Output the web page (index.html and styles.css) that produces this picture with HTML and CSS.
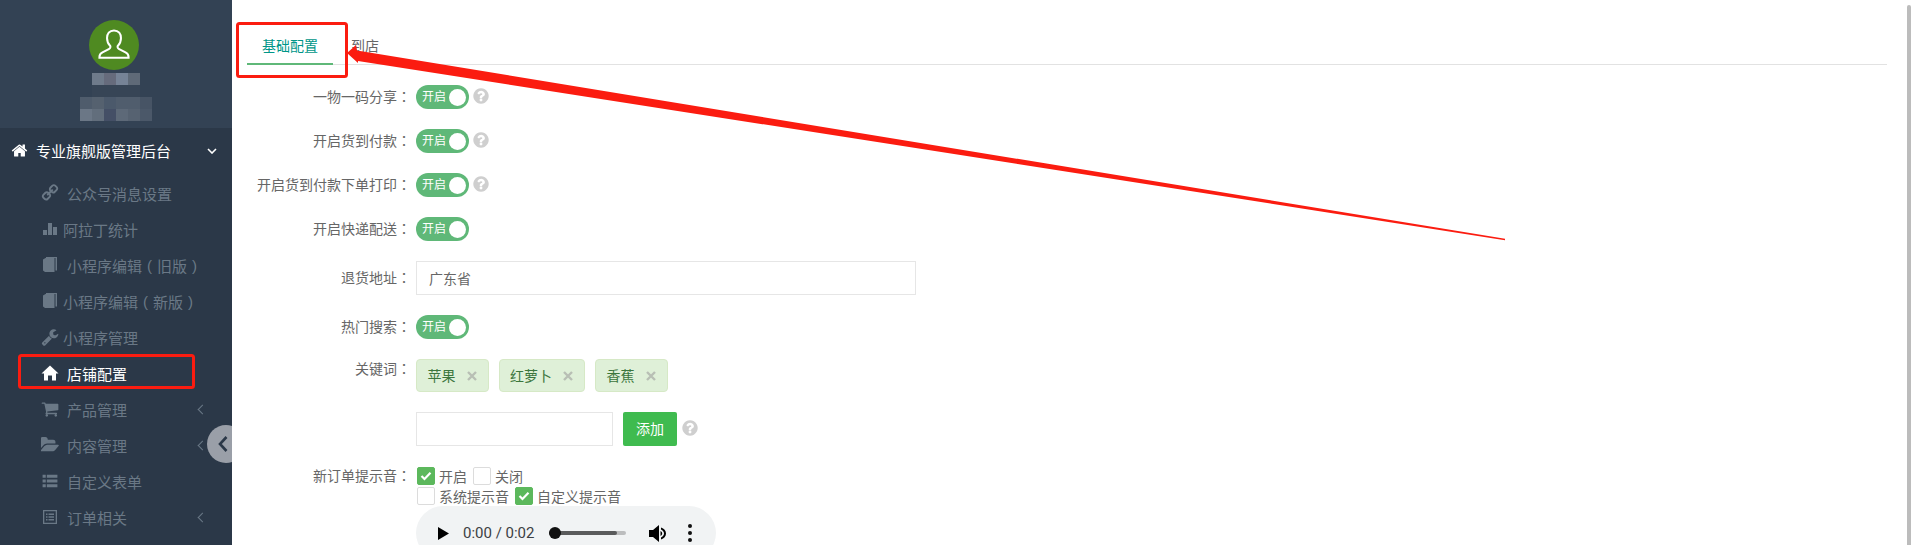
FILE: index.html
```html
<!DOCTYPE html>
<html lang="zh-CN">
<head>
<meta charset="UTF-8" />
<title>店铺配置</title>
<link rel="stylesheet" href="styles.css">
</head>
<body>
<svg class="icon-defs" xmlns="http://www.w3.org/2000/svg">
  <symbol id="i-home" viewBox="0 0 1792 1792"><path d="M1472 992v480q0 26-19 45t-45 19h-384v-384h-256v384h-384q-26 0-45-19t-19-45v-480q0-1 .5-3t.5-3l575-474 575 474q1 2 1 6zm223-69l-62 74q-8 9-21 11h-3q-13 0-21-7l-692-577-692 577q-12 8-24 7-13-2-21-11l-62-74q-8-10-7-23.5t11-21.5l719-599q32-26 76-26t76 26l244 204v-195q0-14 9-23t23-9h192q14 0 23 9t9 23v408l219 182q10 8 11 21.5t-7 23.5z"/></symbol>
  <symbol id="i-house" viewBox="-0.500 -1.500 18 18"><path d="M8.500 0 17 8h-2.500v7h-4v-5h-4v5h-4V8H0z"/></symbol>
  <symbol id="i-link" viewBox="0 0 1792 1792"><path transform="matrix(-1 0 0 1 1792 0)" d="M1520 1216q0-40-28-68l-208-208q-28-28-68-28-42 0-72 32 3 3 19 18.5t21.5 21.5 15 19 13 25.5 3.5 27.5q0 40-28 68t-68 28q-15 0-27.5-3.5t-25.5-13-19-15-21.5-21.5-18.5-19q-33 31-33 73 0 40 28 68l206 207q27 27 68 27 40 0 68-26l147-146q28-28 28-67zm-703-705q0-40-28-68l-206-207q-28-28-68-28-39 0-68 27l-147 146q-28 28-28 67 0 40 28 68l208 208q27 27 68 27 42 0 72-31-3-3-19-18.5t-21.5-21.5-15-19-13-25.5-3.5-27.5q0-40 28-68t68-28q15 0 27.5 3.5t25.5 13 19 15 21.5 21.5 18.5 19q33-31 33-73zm895 705q0 120-85 203l-147 146q-83 83-203 83-121 0-204-85l-206-207q-83-83-83-203 0-123 88-209l-88-88q-86 88-208 88-120 0-204-84l-208-208q-84-84-84-204t85-203l147-146q83-83 203-83 121 0 204 85l206 207q83 83 83 203 0 123-88 209l88 88q86-88 208-88 120 0 204 84l208 208q84 84 84 204z"/></symbol>
  <symbol id="i-bars" viewBox="-2 -2 18 18"><path d="M0 8h4v5H0zM5 1h4v12H5zM10 5h4v8h-4z"/></symbol>
  <symbol id="i-book" viewBox="-2 -1 18 18"><path d="M0 2.500 2.500 1h9v14H2L0 13.500z"/><path d="M3 0h11v13.500h-1.500V1H3z"/></symbol>
  <symbol id="i-wrench" viewBox="0 0 1792 1792"><path d="M448 1472q0-26-19-45t-45-19-45 19-19 45 19 45 45 19 45-19 19-45zm644-420l-682 682q-37 37-90 37-52 0-91-37l-106-108q-38-36-38-90 0-53 38-91l681-681q39 98 114.5 173.5t173.5 114.5zm634-435q0 39-23 106-47 134-164.5 217.5t-258.5 83.5q-185 0-316.5-131.5t-131.5-316.5 131.5-316.5 316.5-131.5q58 0 121.5 16.5t107.5 46.5q16 11 16 28t-16 28l-293 169v224l193 107q5-3 79-48.5t135.5-81 70.5-35.5q15 0 23.5 10t8.5 25z"/></symbol>
  <symbol id="i-cart" viewBox="0 0 1792 1792"><path d="M704 1536q0 52-38 90t-90 38-90-38-38-90 38-90 90-38 90 38 38 90zm896 0q0 52-38 90t-90 38-90-38-38-90 38-90 90-38 90 38 38 90zm128-1088v512q0 24-16.5 42.5t-40.5 21.5l-1044 122q13 60 13 70 0 16-24 64h920q26 0 45 19t19 45-19 45-45 19h-1024q-26 0-45-19t-19-45q0-11 8-31.5t16-36 21.5-40 15.5-29.5l-177-823h-204q-26 0-45-19t-19-45 19-45 45-19h256q16 0 28.5 6.5t19.5 15.5 13 24.5 8 26 5.5 29.5 4.5 26h1201q26 0 45 19t19 45z"/></symbol>
  <symbol id="i-folder" viewBox="0 0 1792 1792"><path d="M1781 931q0 35-35 73l-336 396q-43 51-120.5 86.5t-143.5 35.5h-1088q-34 0-60.5-13t-26.5-43q0-35 35-73l336-396q43-51 120.5-86.5t143.5-35.5h1088q34 0 60.5 13t26.5 43zm-343-344v160h-832q-94 0-197 47.5t-164 119.5l-337 396-5 6q0-4-.5-12.5t-.5-12.5v-960q0-92 66-158t158-66h320q92 0 158 66t66 158v32h544q92 0 158 66t66 158z"/></symbol>
  <symbol id="i-list" viewBox="-1.500 -1.500 17 17"><path d="M0 1h3v3H0zM4 1h10v3H4zM0 5.500h3v3H0zM4 5.500h10v3H4zM0 10h3v3H0zM4 10h10v3H4z"/></symbol>
  <symbol id="i-list-alt" viewBox="-2 -2 18 18"><path fill-rule="evenodd" d="M0 0h14v14H0zM1.300 1.300v11.400h11.400V1.300zM3 3.500h1.500V5H3zM5.500 3.500H11V5H5.500zM3 6.300h1.500v1.500H3zM5.500 6.300H11v1.500H5.500zM3 9.100h1.500v1.500H3zM5.500 9.100H11v1.500H5.500z"/></symbol>
  <symbol id="i-help" viewBox="0 0 1792 1792"><path d="M1024 1376v-192q0-14-9-23t-23-9h-192q-14 0-23 9t-9 23v192q0 14 9 23t23 9h192q14 0 23-9t9-23zm256-672q0-88-55.500-163t-138.500-116-170-41q-243 0-371 213-15 24 8 42l132 100q7 6 19 6 16 0 25-12 53-68 86-92 34-24 86-24 48 0 85.500 26t37.500 59q0 38-20 61t-68 45q-63 28-115.500 86.500t-52.500 125.500v36q0 14 9 23t23 9h192q14 0 23-9t9-23q0-19 21.500-49.500t54.500-49.500q32-18 49-28.500t46-35 44.500-48 28-60.500 12.500-81zm384 192q0 209-103 385.500t-279.500 279.500-385.500 103-385.500-103-279.500-279.500-103-385.500 103-385.500 279.500-279.500 385.500-103 385.500 103 279.500 279.500 103 385.500z"/></symbol>
  <symbol id="i-check" viewBox="0 0 12 10"><path d="M1.500 5 4.500 8 10.500 1.800" fill="none" stroke="#fff" stroke-width="2.200"/></symbol>
  <symbol id="i-x" viewBox="0 0 10 10"><path d="M1 1l8 8M9 1l-8 8" fill="none" stroke="#b8bfb4" stroke-width="2.400"/></symbol>
</svg>

<div class="page">
  <aside class="sidebar">
    <div class="profile">
      <div class="avatar">
        <svg width="38" height="38" viewBox="0 0 30 30" fill="none" stroke="#fff" stroke-width="1.600">
          <path d="M15 3.500c-3.700 0-5.500 2.700-5.500 6 0 2.600 1 4.700 2.400 6 .6 1 .3 2-1 2.700l-5 2.600c-1.600.8-2.400 2-2.400 3.700v.5h23v-.5c0-1.700-.8-2.900-2.400-3.700l-5-2.600c-1.300-.7-1.600-1.700-1-2.700 1.400-1.300 2.400-3.400 2.400-6 0-3.300-1.800-6-5.500-6z"/>
        </svg>
      </div>
      <!-- 打码的用户名 -->
      <svg class="mosaic" width="72" height="52" viewBox="0 0 72 52">
        <rect x="12" y="0" width="12" height="12" fill="#6f7b8b"/>
        <rect x="24" y="0" width="12" height="12" fill="#666b7c"/>
        <rect x="36" y="0" width="12" height="12" fill="#768396"/>
        <rect x="48" y="0" width="12" height="12" fill="#5f6a78"/>
        <rect x="12" y="12" width="48" height="12" fill="#374556"/>
        <rect x="0" y="24" width="12" height="12" fill="#4f5c6c"/>
        <rect x="12" y="24" width="12" height="12" fill="#55616f"/>
        <rect x="24" y="24" width="12" height="12" fill="#4b596b"/>
        <rect x="36" y="24" width="24" height="12" fill="#505d6d"/>
        <rect x="60" y="24" width="12" height="12" fill="#475465"/>
        <rect x="0" y="36" width="12" height="12" fill="#6b7786"/>
        <rect x="12" y="36" width="12" height="12" fill="#626e7c"/>
        <rect x="24" y="36" width="12" height="12" fill="#444f66"/>
        <rect x="36" y="36" width="12" height="12" fill="#5d6978"/>
        <rect x="48" y="36" width="12" height="12" fill="#566271"/>
        <rect x="60" y="36" width="12" height="12" fill="#4b5869"/>
      </svg>
    </div>
    <nav class="nav">
      <div class="nav-top">
        <svg class="nav-top-icon"><use href="#i-home"/></svg>
        <span>专业旗舰版管理后台</span>
        <svg class="nav-caret-down" viewBox="0 0 10 6"><path d="M1 1l4 4 4-4"/></svg>
      </div>
      <a class="nav-item"><svg class="nav-icon"><use href="#i-link"/></svg>公众号消息设置</a>
      <a class="nav-item tight"><svg class="nav-icon"><use href="#i-bars"/></svg>阿拉丁统计</a>
      <a class="nav-item"><svg class="nav-icon"><use href="#i-book"/></svg>小程序编辑<span class="paren">(</span>旧版<span class="paren">)</span></a>
      <a class="nav-item tight"><svg class="nav-icon"><use href="#i-book"/></svg>小程序编辑<span class="paren">(</span>新版<span class="paren">)</span></a>
      <a class="nav-item tight"><svg class="nav-icon"><use href="#i-wrench"/></svg>小程序管理</a>
      <a class="nav-item active"><svg class="nav-icon"><use href="#i-house"/></svg>店铺配置</a>
      <a class="nav-item has-sub"><svg class="nav-icon"><use href="#i-cart"/></svg>产品管理</a>
      <a class="nav-item has-sub"><svg class="nav-icon"><use href="#i-folder"/></svg>内容管理</a>
      <a class="nav-item"><svg class="nav-icon"><use href="#i-list"/></svg>自定义表单</a>
      <a class="nav-item has-sub"><svg class="nav-icon"><use href="#i-list-alt"/></svg>订单相关</a>
    </nav>
    <div class="collapse-btn">
      <svg width="12" height="18" viewBox="0 0 12 18"><path d="M9.500 2 3 9l6.500 7" fill="none" stroke="#2b3848" stroke-width="2.600"/></svg>
    </div>
  </aside>

  <main class="main">
    <div class="tabs">
      <a class="tab active">基础配置</a>
      <a class="tab">到店</a>
    </div>

    <div class="form">
      <div class="form-row">
        <label class="form-label">一物一码分享<span class="fw">：</span></label>
        <span class="switch">开启</span>
        <svg class="help"><use href="#i-help"/></svg>
      </div>
      <div class="form-row">
        <label class="form-label">开启货到付款<span class="fw">：</span></label>
        <span class="switch">开启</span>
        <svg class="help"><use href="#i-help"/></svg>
      </div>
      <div class="form-row">
        <label class="form-label">开启货到付款下单打印<span class="fw">：</span></label>
        <span class="switch">开启</span>
        <svg class="help"><use href="#i-help"/></svg>
      </div>
      <div class="form-row">
        <label class="form-label">开启快递配送<span class="fw">：</span></label>
        <span class="switch">开启</span>
      </div>
      <div class="form-row">
        <label class="form-label">退货地址<span class="fw">：</span></label>
        <input class="text-input wide" type="text" value="广东省">
      </div>
      <div class="form-row">
        <label class="form-label">热门搜索<span class="fw">：</span></label>
        <span class="switch">开启</span>
      </div>
      <div class="form-row top">
        <label class="form-label">关键词<span class="fw">：</span></label>
        <div class="tags">
          <span class="tag">苹果<svg class="tag-x"><use href="#i-x"/></svg></span>
          <span class="tag">红萝卜<svg class="tag-x"><use href="#i-x"/></svg></span>
          <span class="tag">香蕉<svg class="tag-x"><use href="#i-x"/></svg></span>
        </div>
      </div>
      <div class="form-row keyword-row">
        <span class="form-label"></span>
        <input class="text-input narrow" type="text">
        <button class="add-btn">添加</button>
        <svg class="help"><use href="#i-help"/></svg>
      </div>
      <div class="form-row top sound-row">
        <label class="form-label">新订单提示音<span class="fw">：</span></label>
        <div class="sound">
          <div class="check-line">
            <span class="check on"><svg><use href="#i-check"/></svg></span><span class="check-text">开启</span>
            <span class="check"></span><span class="check-text">关闭</span>
          </div>
          <div class="check-line">
            <span class="check"></span><span class="check-text">系统提示音</span>
            <span class="check on"><svg><use href="#i-check"/></svg></span><span class="check-text">自定义提示音</span>
          </div>
          <div class="player">
            <svg class="play" viewBox="0 0 11 13"><path d="M0 0l11 6.500L0 13z"/></svg>
            <span class="time">0:00 / 0:02</span>
            <div class="track"><div class="track-done"></div><div class="track-thumb"></div></div>
            <svg class="volume" viewBox="0 0 18 17"><path d="M0 5h4l6-5v17l-6-5H0z"/><path d="M12 2.500c3 1 5 3.300 5 6s-2 5-5 6v-2c1.800-.8 3-2.300 3-4s-1.200-3.200-3-4z"/><path d="M11.500 6c1 .5 1.700 1.400 1.700 2.500s-.7 2-1.700 2.500z"/></svg>
            <div class="more"><b></b><b></b><b></b></div>
          </div>
        </div>
      </div>
    </div>
    <div class="scroll-thumb"></div>
  </main>
</div>

<!-- 截图上的红色标注 -->
<svg class="markup" width="1916" height="545" viewBox="0 0 1916 545">
  <rect x="237.500" y="23.500" width="109" height="53" rx="2" fill="none" stroke="#fb1c10" stroke-width="3"/>
  <rect x="19.500" y="355.500" width="174" height="32" rx="2" fill="none" stroke="#fb1c10" stroke-width="3"/>
  <path d="M347 53 356 45 357 50.500 1505 238.800 1505 240.200 358 61 358 63z" fill="#fb1c10"/>
</svg>
</body>
</html>
```
FILE: styles.css
```css
html, body {
  margin: 0;
  height: 100%;
  overflow: hidden;
  background: #fff;
  font-family: "Noto Sans CJK SC", "Liberation Sans", sans-serif;
  font-size: 14px;
}

.icon-defs {
  display: none;
}

/* 全角标点居中 */
.fw {
  font-family: "Noto Sans CJK TC", sans-serif;
  font-feature-settings: "locl" 0;
}

.paren {
  width: 15px;
  font-family: "Liberation Sans", sans-serif;
  text-align: center;
}

.page {
  display: flex;
  height: 545px;
}

/* 左侧菜单 */
.sidebar {
  position: relative;
  flex: 0 0 232px;
  overflow: hidden;
  background: #2b3848;
}

.profile {
  display: flex;
  flex-direction: column;
  align-items: center;
  height: 128px;
  padding-top: 20px;
  box-sizing: border-box;
  background: #334254;
}

.avatar {
  display: flex;
  flex: none;
  justify-content: center;
  align-items: center;
  width: 50px;
  height: 50px;
  margin-right: 4px;
  border-radius: 50%;
  background: #4f8a21;
}

.mosaic {
  display: block;
  margin-top: 3px;
  flex: none;
}

.nav-top {
  display: flex;
  align-items: center;
  box-sizing: border-box;
  height: 47px;
  padding: 0 0 2px 11px;
  color: #fff;
  font-size: 15px;
}

.nav-top-icon {
  width: 17px;
  height: 17px;
  margin-right: 8px;
  fill: #fff;
}

.nav-caret-down {
  width: 10px;
  height: 6px;
  margin-left: 36px;
  fill: none;
  stroke: #fff;
  stroke-width: 1.6;
}

.nav-item {
  position: relative;
  display: flex;
  align-items: center;
  height: 36px;
  padding-left: 41px;
  color: #6a7886;
  font-size: 15px;
  white-space: nowrap;
}

.nav-icon {
  flex: none;
  width: 18px;
  height: 18px;
  margin-right: 8px;
  fill: #6a7886;
}

.nav-item.tight .nav-icon {
  margin-right: 4px;
}

.nav-item.active {
  color: #fff;
}

.nav-item.active .nav-icon {
  fill: #fff;
}

.nav-item.has-sub::after {
  content: "";
  position: absolute;
  left: 199px;
  top: 15px;
  width: 6px;
  height: 6px;
  border-left: 1px solid #6a7886;
  border-bottom: 1px solid #6a7886;
  transform: rotate(45deg);
}

.collapse-btn {
  position: absolute;
  left: 207px;
  top: 425px;
  display: flex;
  align-items: center;
  width: 38px;
  height: 38px;
  padding-left: 10px;
  box-sizing: border-box;
  border-radius: 50%;
  background: #9a9fa8;
}

/* 右侧内容 */
.main {
  position: relative;
  flex: 1;
  min-width: 0;
}

.tabs {
  display: flex;
  margin: 29px 29px 0 15px;
  height: 36px;
  box-sizing: border-box;
  border-bottom: 1px solid #e2e2e2;
}

.tab {
  height: 35px;
  line-height: 32px;
  margin-right: 18px;
  color: #666;
  font-size: 14px;
}

.tab.active {
  box-sizing: border-box;
  width: 86px;
  height: 36px;
  text-align: center;
  color: #009688;
  border-bottom: 2px solid #5fb878;
}

.form {
  margin-top: 20px;
}

.form-row {
  display: flex;
  align-items: center;
  margin-bottom: 20px;
  color: #666;
}

.form-row.top {
  align-items: flex-start;
}

.form-label {
  flex: none;
  box-sizing: border-box;
  width: 179px;
  margin-right: 5px;
  padding-bottom: 2px;
  line-height: 20px;
  text-align: right;
  white-space: nowrap;
}

.form-row.top .form-label {
  margin-top: -1px;
}

.sound-row {
  margin-bottom: 0;
}

.switch {
  position: relative;
  display: block;
  box-sizing: border-box;
  width: 53px;
  height: 24px;
  padding-left: 6px;
  line-height: 22px;
  border-radius: 12px;
  background: #5fb878;
  color: #fff;
  font-size: 12px;
}

.switch::after {
  content: "";
  position: absolute;
  right: 3px;
  top: 3.500px;
  width: 17px;
  height: 17px;
  border-radius: 50%;
  background: #fff;
}

.help {
  flex: none;
  width: 18px;
  height: 18px;
  margin: -3px 0 0 3px;
  fill: #cfcfcf;
}

.text-input {
  box-sizing: border-box;
  height: 34px;
  padding: 0 12px;
  border: 1px solid #e6e6e6;
  outline: none;
  background: #fff;
  color: #666;
  font: 14px "Noto Sans CJK SC", sans-serif;
}

.text-input.wide {
  width: 500px;
}

.text-input.narrow {
  width: 197px;
}

.tags {
  display: flex;
  gap: 10px;
}

.tag {
  display: flex;
  align-items: center;
  box-sizing: border-box;
  height: 33px;
  padding: 0 11px 2px 10.500px;
  border: 1px solid #d6e9c6;
  border-radius: 4px;
  background: #dff0d8;
  color: #3c763d;
}

.tag-x {
  width: 10px;
  height: 10px;
  margin: 2px 0 0 11px;
}

.add-btn {
  width: 54px;
  height: 34px;
  margin-left: 10px;
  padding: 0 0 2px;
  border: none;
  border-radius: 2px;
  background: #3fbb4f;
  color: #fff;
  font: 14px "Noto Sans CJK SC", sans-serif;
}

.keyword-row .help {
  margin-left: 4px;
}

.sound {
  display: flex;
  flex-direction: column;
  padding-left: 1px;
}

.check-line {
  display: flex;
  align-items: center;
  height: 20px;
}

.check {
  display: flex;
  justify-content: center;
  align-items: center;
  box-sizing: border-box;
  width: 18px;
  height: 18px;
  border: 1px solid #dcdcdc;
  border-radius: 2px;
  background: #fff;
}

.check.on {
  border-color: #5cb85c;
  background: #5cb85c;
}

.check svg {
  width: 12px;
  height: 10px;
}

.check-text {
  margin: 0 6px 0 4px;
}

/* 音频播放器 */
.player {
  display: flex;
  align-items: center;
  box-sizing: border-box;
  width: 300px;
  height: 54px;
  margin-left: -1px;
  padding-left: 22px;
  border-radius: 27px;
  background: #f1f3f4;
  color: #3c4043;
  font-family: Roboto, sans-serif;
  font-size: 15px;
}

.play {
  width: 11px;
  height: 13px;
}

.time {
  margin-left: 14px;
  width: 86px;
  white-space: nowrap;
}

.track {
  position: relative;
  width: 77px;
  height: 4px;
  border-radius: 2px;
  background: #bcbdbe;
}

.track-done {
  width: 68px;
  height: 4px;
  border-radius: 2px;
  background: #5a5b5c;
}

.track-thumb {
  position: absolute;
  left: 0;
  top: -4px;
  width: 12px;
  height: 12px;
  border-radius: 50%;
  background: #111;
}

.volume {
  width: 18px;
  height: 17px;
  margin-left: 23px;
}

.more {
  display: flex;
  flex-direction: column;
  gap: 3px;
  margin-left: 21px;
}

.more b {
  display: block;
  width: 4px;
  height: 4px;
  border-radius: 50%;
  background: #111;
}

.scroll-thumb {
  position: absolute;
  top: 5px;
  right: 5px;
  width: 4px;
  height: 540px;
  border-radius: 2px 2px 0 0;
  background: #bcbcbc;
}

/* 标注层 */
.markup {
  position: absolute;
  left: 0;
  top: 0;
  pointer-events: none;
}
```
